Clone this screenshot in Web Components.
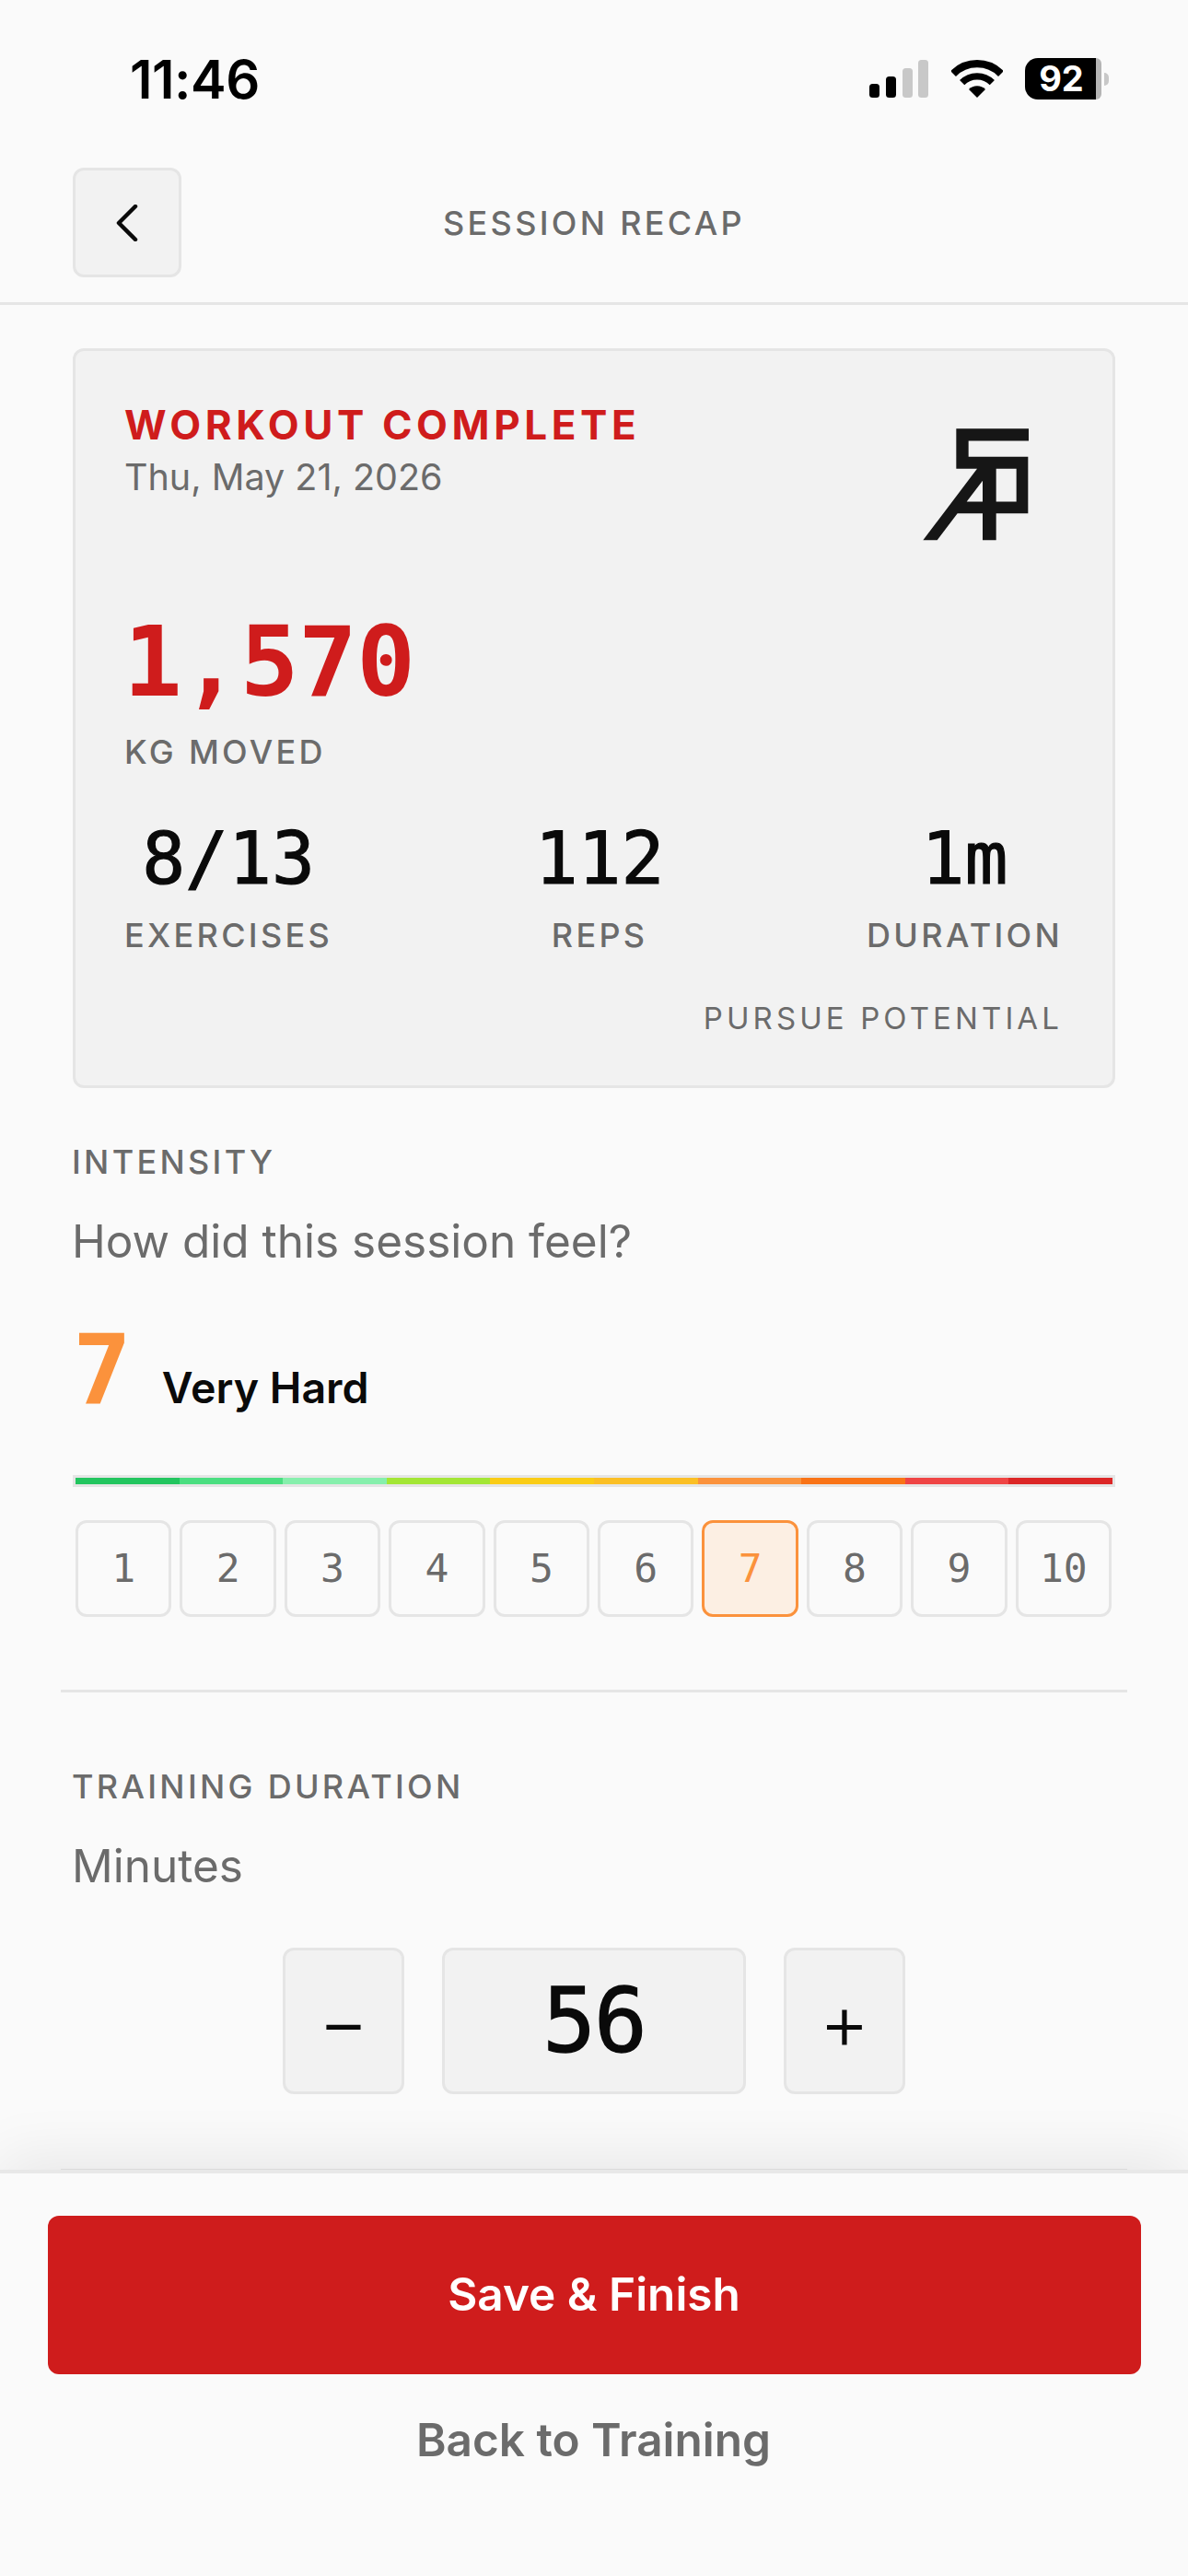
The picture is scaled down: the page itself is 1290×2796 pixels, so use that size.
<!DOCTYPE html>
<html>
<head>
<meta charset="utf-8">
<title>Session Recap</title>
<style>
  html, body { margin: 0; padding: 0; background: #fafafa; }
  body { font-family: Inter, "Noto Sans", sans-serif; color: #0a0a0a; }
</style>
</head>
<body>
<app-shell>
  <status-bar time="11:46" battery="92"></status-bar>
  <app-header title="SESSION RECAP"></app-header>
  <recap-body slot="body">
    <recap-card title="WORKOUT COMPLETE" date="Thu, May 21, 2026" total="1,570" unit="KG MOVED" tag="PURSUE POTENTIAL">
      <stat-item value="8/13" label="EXERCISES"></stat-item>
      <stat-item value="112" label="REPS"></stat-item>
      <stat-item value="1m" label="DURATION"></stat-item>
    </recap-card>
    <intensity-picker value="7" text="Very Hard"></intensity-picker>
    <section-rule></section-rule>
    <duration-stepper value="56"></duration-stepper>
    <section-rule></section-rule>
  </recap-body>
  <footer-actions slot="footer"></footer-actions>
</app-shell>

<script>
const MONO = '"DejaVu Sans Mono", "Liberation Mono", monospace';

function createElement(elementName, styles, template) {
  customElements.define(elementName, class extends HTMLElement {
    constructor() {
      super();
      this.attachShadow({ mode: 'open' });
    }
    connectedCallback() {
      this.shadowRoot.innerHTML = `<style>${styles}</style>` + template(this);
    }
  });
}

const attr = (el, name) => el.getAttribute(name) || '';

createElement('app-shell', `
  :host { display: flex; flex-direction: column; width: 1290px; height: 2796px; overflow: hidden; background: #fafafa; }
  .body { flex: 1; min-height: 0; overflow: hidden; }
  .footer { position: relative; z-index: 1; }
`, () => `
  <slot></slot>
  <div class="body"><slot name="body"></slot></div>
  <div class="footer"><slot name="footer"></slot></div>
`);

createElement('status-bar', `
  :host { display: flex; justify-content: space-between; align-items: center; height: 155px; padding: 16px 86px 0 141px; box-sizing: border-box; }
  .time { font: 600 58px/1 Inter, sans-serif; color: #000; letter-spacing: -0.5px; }
  .icons { display: flex; align-items: center; }
  svg { display: block; }
  .wifi { margin-left: 25px; }
  .battery { display: flex; align-items: center; margin-left: 24px; }
  .cell { width: 77px; height: 45px; box-sizing: border-box; background: #000; border-radius: 14px 0 0 14px; color: #fff;
    font: 700 38px/45px Inter, sans-serif; text-align: center; padding-left: 2px; }
  .rest { width: 6px; height: 45px; background: #b5b5b5; border-radius: 0 10px 10px 0; }
  .nub { width: 5px; height: 14px; margin-left: 3px; background: #c8c8c8; border-radius: 0 7px 7px 0; }
`, (el) => `
  <span class="time">${attr(el, 'time')}</span>
  <div class="icons">
    <svg width="64" height="41" viewBox="0 0 64 41">
      <rect x="0" y="26" width="11" height="15" rx="3.5" fill="#000"/>
      <rect x="18" y="18" width="11" height="23" rx="3.5" fill="#000"/>
      <rect x="36" y="9" width="11" height="32" rx="3.5" fill="#c8c8c8"/>
      <rect x="53" y="0" width="11" height="41" rx="3.5" fill="#c8c8c8"/>
    </svg>
    <svg class="wifi" width="56" height="41" viewBox="398 75 168 123">
      <path d="M404 120A110 110 0 0 1 560 120" fill="none" stroke="#000" stroke-width="25"/>
      <path d="M433 149A69 69 0 0 1 531 149" fill="none" stroke="#000" stroke-width="22"/>
      <path d="M482 198L455 171A38 38 0 0 1 509 171Z" fill="#000"/>
    </svg>
    <div class="battery"><div class="cell">${attr(el, 'battery')}</div><div class="rest"></div><div class="nub"></div></div>
  </div>
`);

createElement('app-header', `
  :host { display: grid; grid-template-columns: 118px 1fr 118px; align-items: center; padding: 27px 79px; border-bottom: 3px solid #e5e5e5; }
  .back { display: flex; align-items: center; justify-content: center; height: 119px; box-sizing: border-box; background: #f2f2f2; border: 3px solid #e5e5e5; border-radius: 12px; }
  .title { text-align: center; font: 500 36px/1 Inter, sans-serif; letter-spacing: 3.3px; color: #6b6b6b; }
`, (el) => `
  <div class="back">
    <svg width="24" height="40" viewBox="0 0 24 40"><path d="M21 2L3 20L21 38" fill="none" stroke="#0a0a0a" stroke-width="4.5" stroke-linecap="round" stroke-linejoin="round"/></svg>
  </div>
  <div class="title">${attr(el, 'title')}</div>
  <div></div>
`);

createElement('recap-body', `
  :host { display: block; padding: 47px 79px 0; }
`, () => `<slot></slot>`);

createElement('recap-card', `
  :host { display: block; box-sizing: border-box; height: 803px; padding: 54px 54px 0 53px; background: #f2f2f2; border: 3px solid #e5e5e5; border-radius: 12px; }
  .top { display: flex; justify-content: space-between; align-items: flex-start; }
  .title { font: 700 44px/50px Inter, sans-serif; letter-spacing: 4.6px; color: #cf1c1c; padding-top: 1px; }
  .date { font: 400 39.5px/50px Inter, sans-serif; color: #6b6b6b; margin-top: 7px; }
  .logo { display: block; width: 115px; height: 122px; margin: 30px 37px 0 0; }
  .total { font: 700 106px/116px ${MONO}; letter-spacing: -0.5px; color: #cf1c1c; margin: 74px 0 0 -1px; }
  .unit { font: 500 36px/44px Inter, sans-serif; letter-spacing: 3.3px; color: #6b6b6b; margin-top: 17px; }
  .stats { display: flex; justify-content: space-between; margin-top: 50px; }
  .tag { text-align: right; font: 400 33px/40px Inter, sans-serif; letter-spacing: 4.1px; color: #6b6b6b; margin-top: 48px; }
`, (el) => `
  <div class="top">
    <div>
      <div class="title">${attr(el, 'title')}</div>
      <div class="date">${attr(el, 'date')}</div>
    </div>
    <svg class="logo" viewBox="125 105 345 365"><path fill="#161616" fill-rule="evenodd" d="M234 105H470V145H274V197H468V381H364V468H320V381H238L172 468H126L302 236H234ZM364 236V343H430V236ZM320 275L268 343H320Z"/></svg>
  </div>
  <div class="total">${attr(el, 'total')}</div>
  <div class="unit">${attr(el, 'unit')}</div>
  <div class="stats"><slot></slot></div>
  <div class="tag">${attr(el, 'tag')}</div>
`);

createElement('stat-item', `
  :host { display: flex; flex-direction: column; align-items: center; }
  .value { font: 400 78px/88px ${MONO}; color: #0a0a0a; -webkit-text-stroke: 1.2px #0a0a0a; }
  .label { font: 500 36px/44px Inter, sans-serif; letter-spacing: 3.3px; color: #6b6b6b; margin-top: 17px; }
`, (el) => `
  <div class="value">${attr(el, 'value')}</div>
  <div class="label">${attr(el, 'label')}</div>
`);

createElement('section-heading', `
  :host { display: block; margin-left: -1px; }
  .label { font: 500 36px/44px Inter, sans-serif; letter-spacing: 3.3px; color: #6b6b6b; }
  .sub { font: 400 49.5px/58px Inter, sans-serif; color: #6b6b6b; margin-top: 35px; }
`, (el) => `
  <div class="label">${attr(el, 'label')}</div>
  <div class="sub">${attr(el, 'sub')}</div>
`);

const SCALE = ['#22c55e', '#4ade80', '#86efac', '#a3e635', '#facc15', '#fbbf24', '#fb923c', '#f97316', '#ef4444', '#dc2626'];

createElement('intensity-picker', `
  :host { display: block; padding-top: 58px; }
  .picked { display: flex; align-items: baseline; gap: 33px; margin-top: 51px; }
  .num { font: 700 106px/120px ${MONO}; color: #fb923c; }
  .word { font: 600 46.5px/58px Inter, sans-serif; color: #0a0a0a; }
  .gauge { display: flex; height: 13px; box-sizing: border-box; border: 3px solid #e5e5e5; margin-top: 54px; }
  .gauge i { flex: 1; }
  .btns { display: flex; gap: 9px; padding: 0 4px 0 3px; margin-top: 36px; }
  .btn { flex: 1; height: 105px; box-sizing: border-box; display: flex; align-items: center; justify-content: center;
    border: 3px solid #e5e5e5; border-radius: 12px; font: 400 43px/1 ${MONO}; color: #6b6b6b; }
  .btn.on { background: #fcefe3; border-color: #fb923c; color: #fb923c; }
`, (el) => {
  const value = Number(attr(el, 'value'));
  const buttons = SCALE.map((c, i) => `<div class="btn${i + 1 === value ? ' on' : ''}">${i + 1}</div>`).join('');
  const segments = SCALE.map((c) => `<i style="background:${c}"></i>`).join('');
  return `
    <section-heading label="INTENSITY" sub="How did this session feel?"></section-heading>
    <div class="picked"><span class="num">${value}</span><span class="word">${attr(el, 'text')}</span></div>
    <div class="gauge">${segments}</div>
    <div class="btns">${buttons}</div>
  `;
});

createElement('section-rule', `
  :host { display: block; height: 3px; background: #e5e5e5; margin: 79px -13px 0; }
`, () => ``);

createElement('duration-stepper', `
  :host { display: block; padding: 80px 0 2px; }
  .row { display: flex; justify-content: center; gap: 41px; margin-top: 60px; }
  .box { display: flex; align-items: center; justify-content: center; height: 159px; box-sizing: border-box;
    background: #f2f2f2; border: 3px solid #e5e5e5; border-radius: 12px; color: #0a0a0a; }
  .step { width: 132px; font: 300 84px/1 Inter, sans-serif; }
  .value { width: 330px; font: 400 96px/1 ${MONO}; letter-spacing: -2px; -webkit-text-stroke: 1.4px #0a0a0a; }
`, (el) => `
  <section-heading label="TRAINING DURATION" sub="Minutes"></section-heading>
  <div class="row">
    <div class="box step">&minus;</div>
    <div class="box value">${attr(el, 'value')}</div>
    <div class="box step">+</div>
  </div>
`);

createElement('footer-actions', `
  :host { display: block; height: 441px; box-sizing: border-box; padding: 46px 51px 0 52px; background: #fafafa; border-top: 4px solid #e8e8e8; box-shadow: 0 -12px 60px rgba(0,0,0,.08); }
  .save { display: flex; align-items: center; justify-content: center; height: 172px; background: #cf1c1c; color: #fff; border-radius: 12px; font: 600 49.5px/1 Inter, sans-serif; padding-right: 1px; }
  .back { text-align: center; font: 600 49.5px/58px Inter, sans-serif; color: #6b6b6b; margin-top: 42px; padding-right: 2px; }
`, () => `
  <div class="save">Save &amp; Finish</div>
  <div class="back">Back to Training</div>
`);
</script>
</body>
</html>
